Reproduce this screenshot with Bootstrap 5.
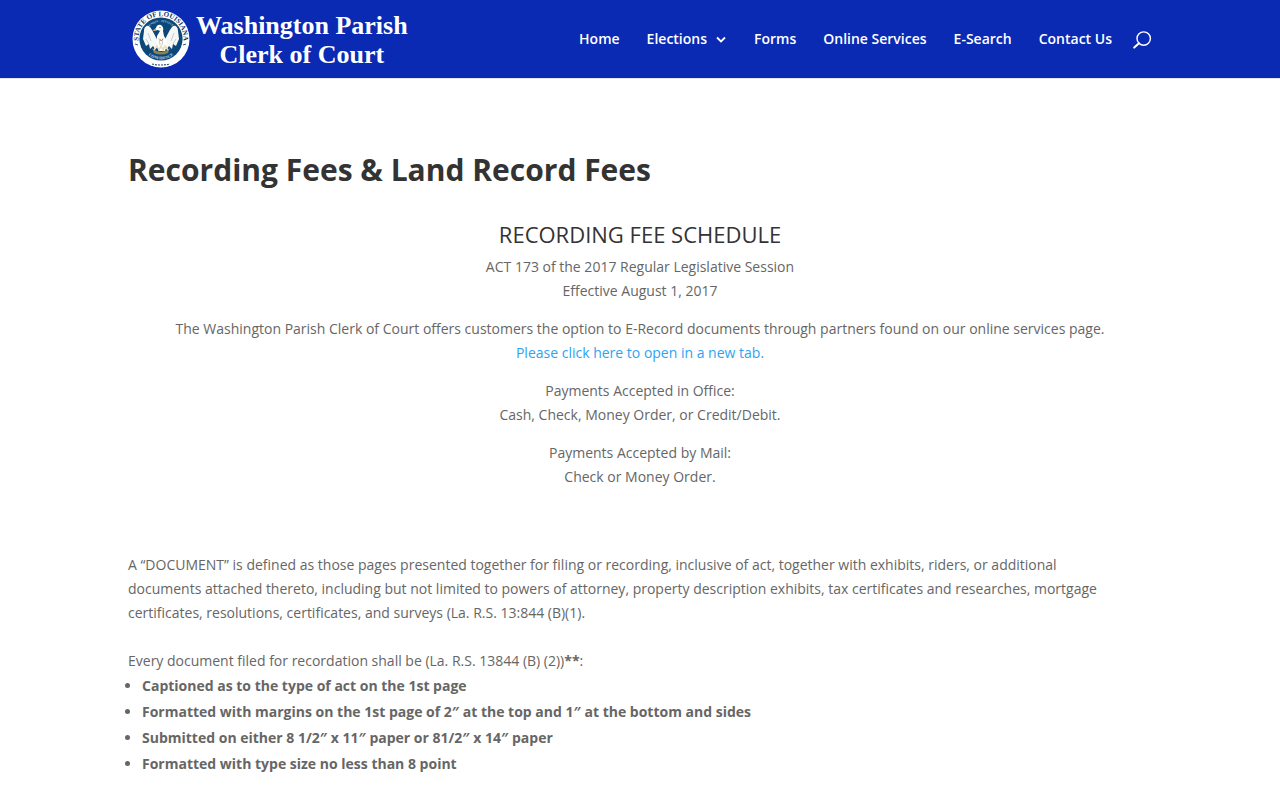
<!DOCTYPE html>
<html lang="en">
<head>
<meta charset="utf-8">
<meta name="viewport" content="width=device-width, initial-scale=1">
<title>Recording Fees &amp; Land Record Fees | Washington Parish Clerk of Court</title>
<link href="https://cdn.jsdelivr.net/npm/bootstrap@5.3.0/dist/css/bootstrap.min.css" rel="stylesheet">
<style>
  body { font-family: "Open Sans", Arial, sans-serif; font-size: 14px; line-height: 24px; color: #666; background: #fff; }
  .page-wrap { width: 80%; max-width: 1080px; }
  .site-header { background: #0a2ab4; min-height: 78px; box-shadow: 0 1px 0 rgba(0,0,0,.1); }
  .brand-link { margin-left: 4px; gap: 6px; color: #fff; text-decoration: none; }
  .seal { overflow: visible; }
  .brand-text { padding-top: 2px; font: bold 26px/29px "Liberation Serif", "Times New Roman", serif; text-align: center; color: #fff; }
  .main-menu { gap: 0 27px; }
  .main-menu .nav-link { padding: 0; color: #fff; font-weight: 600; line-height: 24px; }
  .search-btn { margin-left: 20px; border: 0; padding: 2px 0 0; background: none; line-height: 0; }
  .page-title { font-size: 30px; line-height: 30px; font-weight: 700; color: #333; margin: 0 0 38px; }
  .schedule-title { font-size: 22px; line-height: 22px; font-weight: 400; color: #333; margin: 0 0 10px; }
  main { padding: 77px 0 24px; }
  main p { margin: 0 0 14px; }
  main a { color: #2ea3f2; text-decoration: none; }
  .document-rules { margin-top: 64px; padding-right: 32px; }
  .document-rules p { margin-bottom: 24px; }
  .document-rules p.list-intro { margin-bottom: 0; }
  .rule-list { margin: 0; padding-left: 14px; line-height: 26px; font-weight: 700; }
</style>
</head>
<body>
<header class="site-header d-flex align-items-center">
  <div class="page-wrap mx-auto d-flex flex-wrap align-items-center justify-content-between">
    <a class="brand-link d-flex align-items-center" href="#">
      <svg class="seal" width="58" height="58" viewBox="0 0 58 58" aria-hidden="true">
        <defs>
          <path id="arcTop" d="M10 41A22.6 22.6 0 1 1 48 41"/>
          <path id="arcMotto" d="M14 21A17 17 0 0 1 44 21"/>
          <path id="arcBottom" d="M12 40A20 20 0 0 0 46 40"/>
        </defs>
        <circle cx="29" cy="29" r="28.5" fill="#fff"/>
        <circle cx="29" cy="29" r="21.6" fill="#0b4779"/>
        <g font-family="Liberation Serif, serif" font-weight="bold">
          <text font-size="7" fill="#12355c"><textPath href="#arcTop" startOffset="50%" text-anchor="middle">STATE OF LOUISIANA</textPath></text>
          <text font-size="3" fill="#a9cbe0"><textPath href="#arcMotto" startOffset="50%" text-anchor="middle">UNION · JUSTICE</textPath></text>
          <text font-size="4" fill="#c4dbe9"><textPath href="#arcBottom" startOffset="50%" text-anchor="middle">CONFIDENCE</textPath></text>
        </g>
        <path d="M20 54Q29 56 38 54" fill="none" stroke="#34556f" stroke-width="1.2" stroke-dasharray="2 1"/>
        <path d="M3 34l3 1M54 34l-3 1" stroke="#34556f" stroke-width="1"/>
        <path d="M27 32C24 29 22 22 18 17C15 14 12 17 12 21L11 29L14 36L17 34L18 39L21 36L23 39L27 36Z" fill="#f6f8f5"/>
        <path d="M31 32C34 29 36 22 40 17C43 14 46 17 46 21L47 29L44 36L41 34L40 39L37 36L35 39L31 36Z" fill="#f6f8f5"/>
        <path d="M25 26Q24 34 27 41H33Q37 32 32 26L31 21Q32 17 29 15Q25 14 24 18L21 21L26 20L28 21Z" fill="#fffdf5"/>
        <path d="M16 23L19 31M42 23L39 31M14 29L17 34M44 29L41 34M27 28L28 35M31 28L30 35" fill="none" stroke="#a9bcc6" stroke-width=".7"/>
        <path d="M20 38Q29 46 38 38L36 43Q29 46 22 43Z" fill="#8e8156"/>
        <path d="M22 40l3-4 2 4 2-4 2 4 2-4 3 4" fill="none" stroke="#e7dec2" stroke-width="1.6"/>
        <path d="M24 18l-4 3 4-1" fill="#c99b42"/>
        <circle cx="28" cy="17.5" r=".6" fill="#333"/>
        <path d="M28 29l1 2 2-2" fill="none" stroke="#c98a5d" stroke-width="1"/>
      </svg>
      <span class="brand-text">Washington Parish<br>Clerk of Court</span>
    </a>
    <div class="d-flex align-items-center">
      <nav aria-label="Main">
        <ul class="nav main-menu">
          <li class="nav-item"><a class="nav-link" href="#">Home</a></li>
          <li class="nav-item"><a class="nav-link d-flex align-items-center gap-2" href="#">Elections
            <svg width="12" height="8" viewBox="0 0 12 8" fill="none" stroke="#fff" stroke-width="1.8" aria-hidden="true"><path d="M2 2.5l4 4 4-4"/></svg></a></li>
          <li class="nav-item"><a class="nav-link" href="#">Forms</a></li>
          <li class="nav-item"><a class="nav-link" href="#">Online Services</a></li>
          <li class="nav-item"><a class="nav-link" href="#">E-Search</a></li>
          <li class="nav-item"><a class="nav-link" href="#">Contact Us</a></li>
        </ul>
      </nav>
      <button class="search-btn" type="button" aria-label="Search">
        <svg width="20" height="20" viewBox="0 0 20 20" fill="none" stroke="#fff" aria-hidden="true"><circle cx="11.7" cy="8.6" r="6.7" stroke-width="1.4"/><path d="M7 13.2L2.2 17.6" stroke-width="2" stroke-linecap="round"/></svg>
      </button>
    </div>
  </div>
</header>

<main class="page-wrap mx-auto">
  <h1 class="page-title">Recording Fees &amp; Land Record Fees</h1>
  <section class="text-center">
    <h2 class="schedule-title">RECORDING FEE SCHEDULE</h2>
    <p>ACT 173 of the 2017 Regular Legislative Session<br>Effective August 1, 2017</p>
    <p>The Washington Parish Clerk of Court offers customers the option to E-Record documents through partners found on our online services page.<br><a href="#">Please click here to open in a new tab.</a></p>
    <p>Payments Accepted in Office:<br>Cash, Check, Money Order, or Credit/Debit.</p>
    <p class="mb-0">Payments Accepted by Mail:<br>Check or Money Order.</p>
  </section>
  <section class="document-rules">
    <p>A “DOCUMENT” is defined as those pages presented together for filing or recording, inclusive of act, together with exhibits, riders, or additional documents attached thereto, including but not limited to powers of attorney, property description exhibits, tax certificates and researches, mortgage certificates, resolutions, certificates, and surveys (La. R.S. 13:844 (B)(1).</p>
    <p class="list-intro">Every document filed for recordation shall be (La. R.S. 13844 (B) (2))<strong>**</strong>:</p>
    <ul class="rule-list">
      <li>Captioned as to the type of act on the 1st page</li>
      <li>Formatted with margins on the 1st page of 2″ at the top and 1″ at the bottom and sides</li>
      <li>Submitted on either 8 1/2″ x 11″ paper or 81/2″ x 14″ paper</li>
      <li>Formatted with type size no less than 8 point</li>
    </ul>
  </section>
</main>
<script src="https://cdn.jsdelivr.net/npm/bootstrap@5.3.0/dist/js/bootstrap.bundle.min.js"></script>
</body>
</html>
